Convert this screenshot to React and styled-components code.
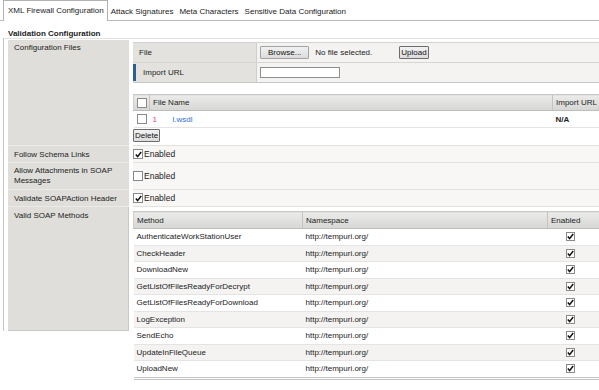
import React from 'react';
import styled, { createGlobalStyle } from 'styled-components';

const GlobalStyle = createGlobalStyle`
  body {
    margin: 0;
    background: #ffffff;
    font-family: "Liberation Sans", Arial, sans-serif;
    font-size: 8px;
    color: #222;
    overflow: hidden;
  }
`;

const Page = styled.div`
  width: 640px;
`;

const TabBar = styled.div`
  display: flex;
  align-items: flex-end;
  height: 20px;
  padding-left: 3px;
  border-bottom: 1px solid #b9b9b9;
`;

const Tab = styled.div`
  display: flex;
  align-items: center;
  padding: ${props => (props.active ? '0 3px 0 4px' : '0 2px')};
  border: 1px solid ${props => (props.active ? '#b3b3b3' : 'transparent')};
  border-bottom: none;
  background: ${props => (props.active ? '#ffffff' : 'transparent')};
  margin-bottom: ${props => (props.active ? '-1px' : '0')};
  height: ${props => (props.active ? '19px' : '18px')};
  padding-bottom: ${props => (props.active ? '1px' : '0')};
  color: #1a1a1a;
`;

const SectionTitle = styled.div`
  font-weight: bold;
  padding: 8px 0 0 8px;
  height: 9px;
  line-height: 9px;
`;

const Frame = styled.div`
  padding: 1px 0 0 5px;
  margin-left: 3px;
  border-top: 1px solid #e2e2e2;
`;

const Row = styled.div`
  display: grid;
  grid-template-columns: 121px 1fr;
  column-gap: 4px;
  height: ${props => (props.h ? `${props.h}px` : 'auto')};
`;

/* the outer frame line runs down beside the label column only */
const Label = styled.div`
  position: relative;
  box-sizing: border-box;
  align-self: start;
  height: ${props => (props.h ? `${props.h}px` : '100%')};
  background: #dfdeda;
  padding: ${props => props.pad || '4px'} 6px 0 6px;
  line-height: 10px;
  border-bottom: 1px solid ${props => (props.last ? '#c9c9c6' : '#ebeae7')};
  border-right: ${props => (props.last ? '1px solid #c9c9c6' : 'none')};
  &::before {
    content: '';
    position: absolute;
    left: -5px;
    top: ${props => (props.first ? '-2px' : '0')};
    bottom: -1px;
    width: 1px;
    background: #c4c4c4;
  }
`;

const Value = styled.div`
  box-sizing: border-box;
  background: ${props => props.bg || '#f8f7f5'};
  border-bottom: 1px solid ${props => (props.last ? 'transparent' : '#e3e2df')};
  padding: ${props => props.pad || '0'};
  display: ${props => (props.center ? 'flex' : 'block')};
  align-items: center;
`;

const FormTable = styled.div`
  display: grid;
  grid-template-columns: 124px 1fr;
  border-top: 1px solid #d2d2d2;
  border-bottom: 1px solid #c6c6c6;
`;

const FormLabel = styled.div`
  position: relative;
  height: 19px;
  display: flex;
  align-items: center;
  padding-left: ${props => (props.marked ? '10px' : '6px')};
  background: #e3e2de;
  border-right: 1px solid #cfcfcc;
  border-bottom: ${props => (props.first ? '1px solid #d7d6d3' : 'none')};
  &::before {
    content: '';
    display: ${props => (props.marked ? 'block' : 'none')};
    position: absolute;
    left: 0;
    top: 1px;
    bottom: 1px;
    width: 3px;
    background: #2d5f95;
  }
`;

const FormValue = styled.div`
  height: 19px;
  display: flex;
  align-items: center;
  padding-left: 3px;
  background: #f4f3f1;
  border-bottom: ${props => (props.first ? '1px solid #d7d6d3' : 'none')};
`;

const Button = styled.button`
  display: block;
  font-family: inherit;
  font-size: 8px;
  height: 13px;
  padding: 0 ${props => props.px || 5}px;
  line-height: 11px;
  margin-top: ${props => props.mt || 0}px;
  background: linear-gradient(#f1f1f1, #dcdcdc);
  border: 1px solid ${props => (props.strong ? '#6d6d6d' : '#a2a2a2')};
  color: #111;
  border-radius: 1px;
  cursor: default;
`;

const HintText = styled.span`
  margin-left: 6px;
  width: 84px;
`;

const UrlInput = styled.div`
  width: 78px;
  height: 9px;
  background: #ffffff;
  border: 1px solid #8e8e8e;
`;

const GridTable = styled.table`
  border-collapse: collapse;
  width: ${props => props.w}px;
  margin-top: ${props => props.mt || 0}px;
  table-layout: fixed;
  border-bottom: ${props => (props.dbl ? '3px double #c2c2c2' : 'none')};
`;

const Th = styled.th`
  text-align: left;
  font-weight: normal;
  height: ${props => props.h || 15}px;
  padding: 0 0 0 ${props => (props.pl !== undefined ? props.pl : 3)}px;
  background: linear-gradient(#ebebea, #d6d6d4);
  border-top: 1px solid #c8c8c8;
  border-bottom: 1px solid #bdbdbd;
  border-left: 1px solid #c4c4c4;
  &:first-child {
    border-left: 1px solid #cfcfcf;
  }
`;

const Tr = styled.tr`
  background: ${props => (props.alt ? '#f4f3f1' : '#ffffff')};
`;

const Td = styled.td`
  height: ${props => props.h || 16}px;
  padding: 0 0 0 ${props => (props.pl !== undefined ? props.pl : 3)}px;
  border-bottom: 1px solid #e4e4e4;
  font-weight: ${props => (props.bold ? 'bold' : 'normal')};
  vertical-align: middle;
`;

const Box = styled.span`
  display: inline-flex;
  align-items: center;
  justify-content: center;
  box-sizing: border-box;
  width: ${props => props.size || 9}px;
  height: ${props => props.size || 9}px;
  border: 1px solid #8a8a8a;
  background: #ffffff;
  vertical-align: middle;
`;

const CheckLine = styled.div`
  display: flex;
  align-items: center;
  gap: 1px;
  font-size: 8.5px;
`;

const FileIndex = styled.span`
  color: #e0457a;
  display: inline-block;
  width: 20px;
`;

const FileLink = styled.span`
  color: #2f6fd6;
`;

const Check = ({ checked, size }) => (
  <Box size={size}>
    {checked && (
      <svg width="7" height="7" viewBox="0 0 7 7">
        <path d="M0.8 3.6 L2.6 5.6 L6.2 1" fill="none" stroke="#111" strokeWidth="1.5" />
      </svg>
    )}
  </Box>
);

const methods = [
  'AuthenticateWorkStationUser',
  'CheckHeader',
  'DownloadNew',
  'GetListOfFilesReadyForDecrypt',
  'GetListOfFilesReadyForDownload',
  'LogException',
  'SendEcho',
  'UpdateInFileQueue',
  'UploadNew',
];

const EnabledRow = ({ checked }) => (
  <CheckLine>
    <Check checked={checked} size={10} />
    Enabled
  </CheckLine>
);

export default function App() {
  return (
    <Page>
      <GlobalStyle />
      <TabBar>
        <Tab active>XML Firewall Configuration</Tab>
        <Tab>Attack Signatures</Tab>
        <Tab>Meta Characters</Tab>
        <Tab>Sensitive Data Configuration</Tab>
      </TabBar>
      <SectionTitle>Validation Configuration</SectionTitle>
      <Frame>
        <Row>
          <Label first pad="3px">Configuration Files</Label>
          <Value bg="#ffffff" pad="2px 0 3px 0">
            <FormTable>
              <FormLabel first>File</FormLabel>
              <FormValue first>
                <Button px={7}>Browse...</Button>
                <HintText>No file selected.</HintText>
                <Button px={1} strong>Upload</Button>
              </FormValue>
              <FormLabel marked>Import URL</FormLabel>
              <FormValue>
                <UrlInput />
              </FormValue>
            </FormTable>
            <GridTable w={500} mt={11}>
              <colgroup>
                <col style={{ width: 16 }} />
                <col style={{ width: 403 }} />
                <col style={{ width: 81 }} />
              </colgroup>
              <thead>
                <tr>
                  <Th pl={3}><Check size={10} /></Th>
                  <Th>File Name</Th>
                  <Th>Import URL</Th>
                </tr>
              </thead>
              <tbody>
                <Tr>
                  <Td pl={3}><Check size={10} /></Td>
                  <Td>
                    <FileIndex>1</FileIndex>
                    <FileLink>l.wsdl</FileLink>
                  </Td>
                  <Td bold>N/A</Td>
                </Tr>
              </tbody>
            </GridTable>
            <Button px={1} strong mt={1}>Delete</Button>
          </Value>
        </Row>
        <Row h={17}>
          <Label>Follow Schema Links</Label>
          <Value center>
            <EnabledRow checked />
          </Value>
        </Row>
        <Row h={27}>
          <Label pad="3px">Allow Attachments in SOAP Messages</Label>
          <Value center>
            <EnabledRow />
          </Value>
        </Row>
        <Row h={17}>
          <Label>Validate SOAPAction Header</Label>
          <Value center>
            <EnabledRow checked />
          </Value>
        </Row>
        <Row>
          <Label last h={124} pad="4px">Valid SOAP Methods</Label>
          <Value last bg="#ffffff" pad="4px 0 0 0">
            <GridTable w={480} dbl>
              <colgroup>
                <col style={{ width: 169 }} />
                <col style={{ width: 245 }} />
                <col style={{ width: 66 }} />
              </colgroup>
              <thead>
                <tr>
                  <Th h={16}>Method</Th>
                  <Th h={16}>Namespace</Th>
                  <Th h={16}>Enabled</Th>
                </tr>
              </thead>
              <tbody>
                {methods.map((m, i) => (
                  <Tr key={m} alt={i % 2 === 1}>
                    <Td h={15.5}>{m}</Td>
                    <Td h={15.5}>http://tempuri.org/</Td>
                    <Td h={15.5} pl={18}><Check checked size={9} /></Td>
                  </Tr>
                ))}
              </tbody>
            </GridTable>
          </Value>
        </Row>
      </Frame>
    </Page>
  );
}
